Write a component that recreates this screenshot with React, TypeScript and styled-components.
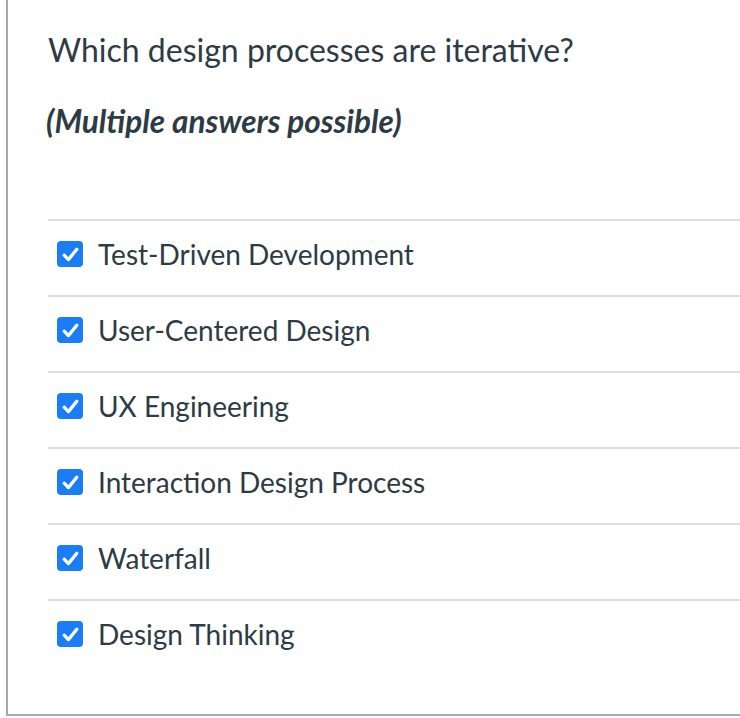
import React from "react";
import styled, { createGlobalStyle } from "styled-components";

const answers = [
  "Test-Driven Development",
  "User-Centered Design",
  "UX Engineering",
  "Interaction Design Process",
  "Waterfall",
  "Design Thinking",
];

const GlobalStyle = createGlobalStyle`
  html, body {
    margin: 0;
    padding: 0;
    background: #ffffff;
    overflow: hidden;
  }
  body {
    font-family: Lato, "Noto Sans", "Liberation Sans", sans-serif;
    color: #2d3b45;
  }
`;

const Check = (): JSX.Element => (
  <svg width="25" height="25" viewBox="0 0 25 25" aria-hidden="true">
    <path
      d="M6.2 13.2 L10.4 17.6 L18.8 7.2"
      fill="none"
      stroke="#ffffff"
      strokeWidth="3.3"
      strokeLinecap="round"
      strokeLinejoin="round"
    />
  </svg>
);

const App = (): JSX.Element => {
  return (
    <>
      <GlobalStyle />
      <Panel>
        <Question>Which design processes are iterative?</Question>
        <Hint>(Multiple answers possible)</Hint>
        <AnswerList>
          {answers.map((answer) => (
            <Answer key={answer}>
              <Box>
                <Check />
              </Box>
              <Label>{answer}</Label>
            </Answer>
          ))}
        </AnswerList>
      </Panel>
    </>
  );
};

export default App;

const Panel = styled.div`
  box-sizing: border-box;
  margin-left: 6px;
  height: 716px;
  padding-top: 31px;
  border-left: 2px solid #a9a9a9;
  border-bottom: 2px solid #a9a9a9;
`;

const Question = styled.h2`
  margin: 0;
  padding-left: 40px;
  font-size: 32px;
  line-height: 38px;
  font-weight: 400;
`;

const Hint = styled.p`
  margin: 34px 0 0;
  padding-left: 38px;
  font-size: 31.5px;
  line-height: 37px;
  font-weight: 700;
  font-style: italic;
`;

const AnswerList = styled.div`
  margin: 79px 0 0 40px;
  display: flex;
  flex-direction: column;
`;

const Answer = styled.label`
  box-sizing: border-box;
  height: 76px;
  padding: 0 0 8px 9px;
  display: flex;
  align-items: center;
  gap: 15px;
  border-top: 2px solid #dddddd;
`;

const Box = styled.span`
  width: 26px;
  height: 26px;
  border-radius: 4px;
  background: #1a7cf7;
  display: flex;
  align-items: center;
  justify-content: center;
  flex-shrink: 0;
`;

const Label = styled.span`
  font-size: 28px;
  line-height: 34px;
`;
